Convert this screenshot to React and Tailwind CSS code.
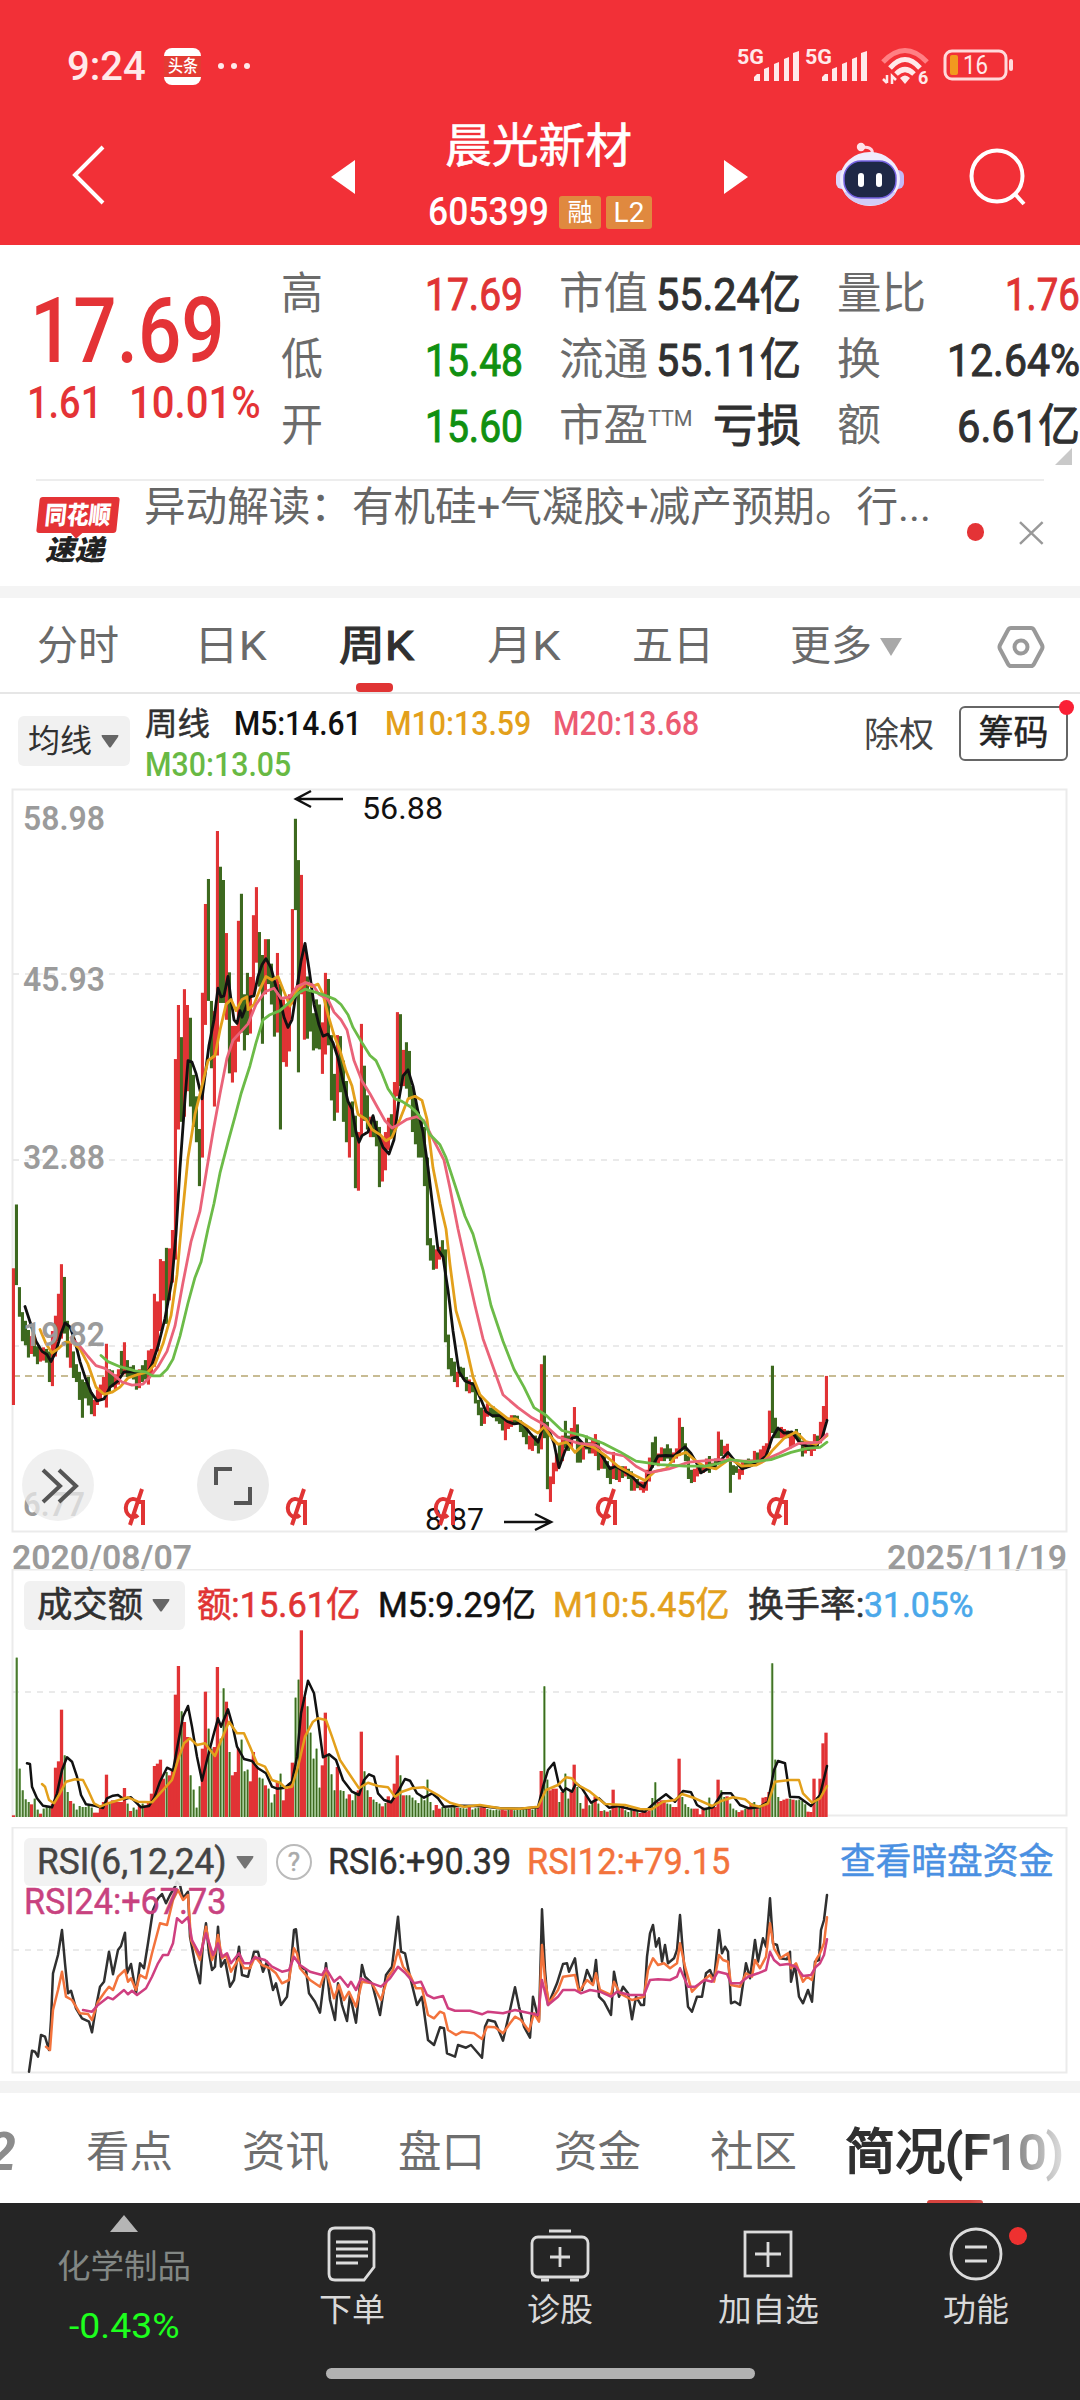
import { useLayoutEffect, useRef } from 'react'

// weekly candles: high, low (pixel depth on the price scale), u = up / d = down
const CANDLES = `957 1225u,832 990d,994 1052d,1043 1100d,1060 1108d,1078 1132d,1090 1125u,1095 1130d,1110 1145d,1115 1140u,1112 1138u,1115 1142d,1120 1180d,1080 1188u,1050 1130u,1007 1100u,949 1095u,974 1085d,1060 1132d,1100 1152u,1120 1172d,1145 1180d,1160 1215d,1175 1250d,1180 1212d,1170 1226d,1200 1243d,1215 1247u,1195 1225u,1185 1215u,1170 1205u,1105 1230u,1155 1200d,1157 1190d,1165 1195u,1155 1185u,1119 1165d,1102 1165u,1137 1170d,1150 1172d,1147 1175d,1158 1195d,1155 1192u,1147 1180d,1137 1175d,1118 1185u,1115 1165u,1007 1150u,1022 1120u,939 1080u,943 1020u,917 1066d,918 1020u,882 985u,547 940u,441 685u,504 670d,410 660u,441 610u,466 640d,578 680d,620 710d,684 796d,417 740u,243 480u,194 433d,433 565d,453 640u,100 540u,170 437d,196 437d,300 470u,377 575d,482 593u,482 573u,276 513u,223 495d,420 530d,378 500d,386 497u,265 425u,210 358u,298 405d,343 517d,312 420u,312 400d,360 440d,395 503d,339 495u,400 685d,430 553u,440 562u,420 532u,253 440u,76 255d,157 573d,186 420u,330 509u,385 507d,415 493d,457 530d,430 526d,440 528d,475 576u,378 538u,390 520d,500 628d,576 668d,500 652u,502 612d,550 670d,590 710d,632 740u,630 700d,658 800d,690 805u,478 700u,560 668d,618 685d,660 700u,660 700d,668 718d,680 798d,700 787u,690 765u,662 725u,655 700d,592 690u,455 620u,459 600d,529 600u,514 605d,531 625d,600 690d,620 714d,650 740d,670 740d,680 796d,740 912d,898 942d,912 960d,920 958u,915 940u,902 935d,920 1102d,1087 1155d,1133 1168d,1140 1180d,1160 1190u,1150 1170d,1152 1175d,1170 1198d,1175 1202u,1180 1200d,1190 1222d,1215 1245d,1230 1266d,1235 1262u,1222 1248u,1230 1245d,1228 1250d,1235 1257d,1240 1262d,1245 1275d,1255 1294u,1250 1272u,1245 1268u,1245 1260d,1246 1262d,1255 1278d,1262 1288d,1270 1302d,1285 1312u,1285 1315u,1285 1305d,1290 1320d,1145 1312u,1128 1290d,1258 1390d,1365 1415u,1338 1380u,1320 1355u,1300 1345d,1285 1335u,1256 1310d,1285 1315d,1270 1310u,1229 1290u,1263 1338d,1295 1338d,1300 1332u,1285 1312d,1298 1320d,1292 1320u,1282 1325u,1295 1353d,1325 1350u,1322 1350d,1335 1368d,1345 1380d,1317 1370u,1345 1372d,1350 1376u,1345 1368d,1345 1365u,1350 1370d,1355 1393d,1370 1393u,1370 1388d,1375 1392u,1375 1397u,1352 1393u,1328 1375u,1298 1348d,1287 1340d,1320 1345u,1308 1335u,1310 1335d,1302 1330d,1310 1335d,1318 1338u,1310 1330u,1250 1325u,1268 1310d,1300 1335d,1325 1370d,1352 1378d,1350 1376u,1345 1365u,1340 1360d,1345 1358u,1330 1352u,1325 1358d,1338 1350u,1330 1352d,1277 1340u,1293 1325d,1305 1322u,1301 1330u,1335 1397d,1343 1362d,1345 1358d,1350 1371u,1335 1362u,1335 1350d,1330 1345d,1332 1345d,1315 1340u,1318 1340d,1312 1335u,1305 1328u,1300 1325u,1236 1310u,1148 1280d,1250 1290d,1270 1290d,1268 1290u,1272 1290u,1275 1290d,1280 1310u,1280 1306u,1272 1290d,1280 1300d,1295 1326d,1300 1320u,1302 1315d,1300 1325u,1282 1315u,1285 1310d,1258 1300u,1227 1290u,1168 1256u`

const M5 = '25,1032 30,1062 36,1100 42,1120 47,1126 51,1140 56,1120 61,1085 65,1064 70,1072 75,1100 80,1140 85,1170 91,1200 97,1217 104,1213 110,1190 118,1178 124,1160 132,1160 140,1162 148,1160 152,1145 158,1110 165,1055 172,980 176,890 180,760 185,625 188,550 192,553 196,575 199,600 202,625 205,580 209,520 214,470 218,408 221,425 224,423 228,385 231,430 234,470 237,477 240,452 242,465 246,445 250,425 254,423 258,385 262,362 266,350 271,368 276,405 280,430 284,465 288,485 292,470 296,420 301,355 305,320 309,370 314,440 319,480 323,502 328,498 333,515 338,545 343,590 348,630 352,645 356,690 359,710 362,697 368,690 373,658 377,690 383,720 389,733 394,705 399,625 403,580 408,568 413,600 418,650 423,690 428,760 433,840 438,920 443,935 448,1000 453,1080 459,1160 465,1178 474,1185 480,1210 486,1238 492,1246 500,1246 508,1258 514,1262 522,1260 530,1280 538,1298 544,1262 549,1275 554,1300 559,1348 565,1315 572,1290 577,1288 585,1305 590,1308 596,1302 602,1325 610,1350 616,1345 624,1355 632,1365 638,1378 644,1386 651,1350 658,1325 666,1324 674,1325 680,1315 685,1307 691,1320 697,1340 701,1358 708,1350 714,1345 720,1335 728,1318 735,1335 742,1350 750,1345 760,1335 766,1325 772,1290 778,1270 784,1280 792,1278 800,1300 808,1307 816,1305 822,1290 827,1255'
const M10 = '40,1077 46,1105 52,1123 58,1115 65,1102 72,1102 80,1115 88,1145 96,1190 104,1204 112,1200 120,1190 128,1172 138,1165 148,1160 155,1145 163,1105 171,1050 177,970 182,860 188,740 195,655 202,600 208,550 215,540 220,490 226,440 231,430 236,452 242,430 247,425 248,450 254,440 260,410 266,385 272,392 278,385 283,410 290,443 296,415 305,397 312,405 318,400 323,420 328,460 334,500 340,530 346,570 352,600 358,655 366,665 372,685 380,695 386,707 392,700 400,665 408,625 415,620 422,628 427,665 433,760 440,830 446,880 450,950 456,1040 465,1100 473,1170 480,1205 490,1225 500,1240 508,1252 516,1252 530,1270 538,1280 544,1268 552,1290 558,1302 567,1298 575,1318 584,1302 594,1308 606,1325 618,1345 630,1358 645,1373 655,1355 666,1350 676,1325 686,1318 696,1335 704,1345 716,1350 730,1330 742,1345 756,1343 764,1335 772,1315 784,1290 796,1278 806,1297 816,1302 827,1285'
const M20 = '71,1093 80,1110 88,1130 96,1148 105,1153 113,1165 122,1180 132,1186 143,1184 150,1170 158,1150 167,1120 175,1070 183,985 191,905 200,845 207,760 213,690 220,615 227,545 233,510 240,495 248,478 256,440 265,415 274,408 281,428 290,425 297,405 306,397 313,402 319,420 328,430 334,455 341,470 347,490 354,550 362,590 370,615 377,640 385,668 392,682 399,675 407,665 417,660 424,668 432,700 440,730 444,745 450,800 458,880 467,960 475,1030 483,1095 493,1150 503,1205 518,1230 532,1250 544,1263 558,1288 579,1300 595,1303 607,1318 624,1325 636,1345 648,1358 669,1350 689,1337 718,1332 742,1335 762,1335 779,1320 799,1300 820,1298 827,1282'
const M30 = '101,1128 108,1140 120,1150 135,1158 145,1160 153,1168 160,1168 167,1155 173,1135 180,1090 188,1025 195,975 201,945 208,880 214,830 220,770 228,710 235,660 241,615 250,560 256,515 263,470 270,460 280,452 290,435 298,418 305,410 315,416 325,422 335,430 341,440 348,460 353,485 362,515 370,540 376,550 382,575 388,605 395,625 402,630 410,640 416,650 424,670 430,695 440,715 446,740 456,800 465,855 473,890 483,960 491,1030 503,1100 514,1155 524,1190 534,1230 546,1245 562,1275 583,1285 603,1300 620,1317 636,1335 660,1342 685,1345 705,1345 718,1340 730,1332 750,1337 771,1332 791,1318 807,1310 820,1308 827,1298'

// weekly turnover, tallest bar = 560
const VOLUME = '5u 478d 145d 80d 53d 45d 38u 55d 22d 10u 25d 30d 30d 40u 148u 167u 322u 185d 75d 48u 40d 22d 33d 30d 30d 35d 28d 13u 13u 30u 45u 127u 45d 50u 50u 45u 45u 87u 40d 18u 28d 22d 35u 40d 35u 45u 70u 153u 160u 172u 115u 135d 125u 140u 367u 453u 317d 285u 240u 125d 82d 28d 92d 205u 376u 265d 205d 210u 450u 235d 386d 346u 195d 125u 135u 205u 232d 137d 142d 107u 195u 150u 118d 115d 95u 85d 43d 68d 108u 130d 50u 85u 100u 163u 358d 412d 560u 360u 332d 253d 175d 205d 88d 155u 313u 185d 128d 80d 150u 80d 78d 55d 68u 50d 75d 80u 256u 137d 80d 60u 52d 45d 40d 32u 42d 62u 50u 100u 185u 125d 65u 65d 65d 58d 50d 42d 60d 50d 112d 45d 20d 36u 25u 30d 27d 26d 28d 30d 28u 27d 26d 25d 30u 22d 26d 28d 29u 30u 24d 22d 20d 22d 20d 22u 20u 22d 24u 20d 22d 24d 22d 24d 24u 22d 26d 30u 138u 392d 112d 80u 85u 85u 45d 75u 130d 55d 78u 157u 90d 42d 25u 65u 35d 45d 62u 40d 18u 20d 16u 20d 82u 32u 30d 35u 20d 15d 20d 18u 20d 12u 15u 15u 20u 57d 104d 45u 50u 50u 40d 38d 30u 30u 175u 60d 38d 30d 25d 25u 25u 8u 28u 25d 58d 32u 30u 112u 80d 60d 62u 40d 25d 20d 15u 20u 25d 30u 42u 45d 30u 35d 58u 60u 75u 461d 172d 60d 48u 52u 55u 55d 52u 50d 52d 48d 38d 16u 15u 115u 60d 115u 221u 253u'

const VOL5 = '27,610 30,612 32,680 37,715 43,737 52,742 57,700 62,630 67,592 72,605 77,650 81,705 86,733 95,737 103,744 107,715 113,707 118,705 124,718 131,712 137,730 141,742 149,738 154,715 160,665 167,623 173,632 178,550 183,470 188,438 192,500 197,590 202,662 207,600 213,530 218,475 221,500 228,448 232,490 237,560 244,597 252,603 258,625 266,640 272,680 277,686 285,683 292,665 297,590 301,460 308,362 314,400 318,480 323,592 329,583 336,600 343,660 352,695 359,705 364,660 369,643 374,650 378,700 384,720 391,727 398,695 405,657 410,662 417,700 424,713 432,700 438,715 444,740 460,737 480,738 500,745 520,746 538,742 543,680 548,630 554,608 559,675 563,695 566,685 572,695 576,670 582,685 591,728 599,715 609,743 618,738 631,748 645,755 656,725 666,703 675,725 683,693 691,697 697,735 704,748 713,742 722,700 731,700 740,735 749,745 759,742 768,725 774,630 778,603 785,610 790,710 799,712 811,738 820,705 827,618'
const VOL10 = '42,672 45,680 49,720 54,730 60,700 66,665 75,658 83,660 88,690 94,730 100,740 110,728 128,712 138,725 152,727 160,700 172,660 178,600 184,550 190,535 197,555 205,550 210,570 215,588 220,550 229,485 237,520 244,520 250,560 257,610 265,620 272,660 280,668 285,683 292,680 298,620 305,530 313,485 318,475 326,480 332,530 340,600 350,645 359,685 368,668 378,678 388,682 395,710 402,695 412,685 424,682 438,705 450,728 464,740 480,735 500,745 520,746 538,740 546,690 558,675 566,652 572,655 578,675 590,695 605,732 625,735 640,747 652,748 663,725 675,720 682,702 695,715 712,738 722,722 733,712 745,718 752,735 760,740 768,730 775,665 790,660 799,660 803,700 812,728 820,715 827,678'

const RSI6 = '29,755 32,692 35,695 38,710 41,645 45,650 49,690 51,600 53,460 58,405 62,330 65,430 68,520 71,512 76,565 82,595 89,605 92,637 96,560 100,500 104,485 109,395 113,463 118,390 121,378 125,338 127,460 131,432 136,520 140,430 144,445 148,370 153,270 158,235 162,222 166,250 170,225 175,200 177,185 180,195 183,235 188,215 190,350 195,430 200,490 203,370 206,310 209,400 212,450 215,440 218,320 221,440 225,420 230,500 234,480 239,380 242,465 248,470 254,395 258,395 263,455 267,425 273,510 276,490 281,555 287,530 291,430 294,330 296,328 300,440 306,450 309,520 315,545 320,578 326,430 330,540 335,600 338,490 342,555 347,603 350,525 356,608 362,435 365,470 372,490 380,585 386,465 392,440 398,290 401,395 405,400 410,470 417,555 422,530 428,660 434,675 440,622 444,625 447,700 455,710 458,675 466,683 471,675 482,713 485,620 488,600 495,605 503,662 510,570 515,502 519,560 524,620 530,653 533,530 537,580 539,600 542,268 545,450 548,555 557,490 563,432 567,430 569,455 575,415 579,510 582,510 587,450 593,490 596,420 599,530 604,545 611,585 614,455 619,530 623,500 628,520 632,598 636,530 641,555 644,555 647,410 650,340 653,315 656,380 659,355 662,425 665,375 668,430 674,415 677,390 680,285 683,400 688,560 692,575 697,530 702,530 706,460 710,450 714,480 719,330 722,400 725,380 728,395 731,550 735,545 740,555 746,430 750,475 755,360 758,425 763,355 766,380 770,235 773,370 777,375 780,415 787,418 790,395 791,485 795,435 799,530 803,550 808,510 812,545 815,425 819,420 821,330 824,300 827,225'
const RSI12 = '46,680 50,690 53,570 58,510 62,455 66,530 72,540 80,580 88,582 92,600 98,545 105,515 109,500 113,510 118,470 125,450 128,485 131,475 136,510 140,465 146,475 152,400 160,310 167,315 173,240 178,210 183,240 188,225 191,360 200,420 206,320 212,420 215,400 218,345 222,415 226,405 231,455 239,415 244,445 250,445 255,410 262,435 270,445 276,460 282,490 289,480 294,385 297,400 300,445 310,480 320,500 326,450 334,535 339,495 344,540 349,515 356,560 362,485 372,490 381,540 388,470 393,450 398,390 403,440 410,465 416,505 422,505 428,585 434,595 440,575 444,580 448,630 456,645 462,635 474,640 482,657 487,620 495,622 503,640 510,610 515,590 521,600 529,633 534,580 539,605 542,375 545,480 549,550 558,510 563,470 575,465 579,515 587,480 593,495 596,460 600,510 611,525 614,485 620,520 632,540 644,530 648,450 653,415 658,435 664,430 670,445 677,430 680,370 685,440 692,515 700,490 710,465 714,485 719,405 723,420 728,425 731,495 740,500 746,460 752,470 755,420 760,445 766,410 770,310 774,385 780,415 788,400 791,445 796,430 803,485 807,470 812,480 816,420 820,400 824,370 827,292'
const RSI24 = '83,570 92,575 98,555 108,532 113,538 124,510 128,523 132,512 137,525 146,505 152,470 158,430 163,405 168,405 173,370 177,295 182,308 188,292 192,360 200,405 206,340 213,405 218,370 222,410 227,400 231,430 239,400 244,430 250,430 255,412 265,420 272,440 282,455 289,450 294,410 300,435 310,455 322,465 326,445 334,485 340,470 348,500 351,485 356,510 361,475 372,490 381,500 390,475 398,440 405,458 414,490 421,485 427,525 434,535 443,528 448,565 455,572 470,572 482,583 488,575 503,580 515,570 530,580 538,585 542,480 548,555 554,540 558,530 563,510 575,510 581,520 590,510 600,515 611,530 617,515 630,525 644,525 650,480 658,478 670,480 677,470 680,445 688,500 695,500 705,480 712,485 718,455 727,462 731,490 740,490 748,470 758,460 766,450 770,395 774,420 780,435 788,432 796,440 803,468 811,465 816,440 820,430 824,405 827,358'

const scaleLine = (line, toY) =>
  line
    .split(' ')
    .map((p) => {
      const [x, y] = p.split(',').map(Number)
      return `${x},${toY(y).toFixed(1)}`
    })
    .join(' ')

const priceY = (v) => 780 + v / 1.96
const volY = (v) => 1560 + v / 3
const rsiY = (v) => 1820 + v / 3

// Squeezes a piece of text to an exact width, like a condensed DIN face
function Fit({ w, className = '', children }) {
  const ref = useRef(null)
  useLayoutEffect(() => {
    ref.current.style.transform = `scaleX(${w / ref.current.offsetWidth})`
  }, [w])
  return (
    <span className={`block shrink-0 whitespace-nowrap leading-none ${className}`} style={{ width: w }}>
      <span ref={ref} className="inline-block origin-left">
        {children}
      </span>
    </span>
  )
}

function Line({ points, toY, color, width = 2.8 }) {
  return (
    <polyline
      points={scaleLine(points, toY)}
      fill="none"
      stroke={color}
      strokeWidth={width}
      strokeLinejoin="round"
      strokeLinecap="round"
    />
  )
}

function GridLine({ y, color = '#e4e4e4', dash = '6 6' }) {
  return <line x1="13" x2="1066" y1={y} y2={y} stroke={color} strokeWidth="1.5" strokeDasharray={dash} />
}

function Signal() {
  return (
    <svg className="h-[36px] w-[64px] overflow-visible" viewBox="0 0 64 36" fill="#ffe9ea">
      <text x="0" y="16" fontSize="20" fontWeight="700" textLength="27" lengthAdjust="spacingAndGlyphs">
        5G
      </text>
      <path d="M17 33v-4l3-3h3v7zM27 33V21l5-2v14zM37 33V16l5-2v19zM47 33V11l5-2v24zM56 33V5l6-2v30z" />
    </svg>
  )
}

function StatusBar() {
  return (
    <div className="flex h-[96px] items-start pt-[46px] text-white">
      <Fit w={79} className="ml-[67px] text-[41px] font-medium text-[#ffe9ea]">9:24</Fit>
      <div className="ml-[18px] mt-[2px] flex h-[37px] w-[37px] flex-col justify-center rounded-[8px] bg-white">
        <div className="bg-[#e43b33] py-[2px]">
          <Fit w={30} className="ml-[4px] text-[17px] font-medium">头条</Fit>
        </div>
      </div>
      <div className="ml-[17px] mt-[17px] flex gap-[7px]">
        <i className="h-[6px] w-[6px] rounded-full bg-[#ffe9ea]" />
        <i className="h-[6px] w-[6px] rounded-full bg-[#ffe9ea]" />
        <i className="h-[6px] w-[6px] rounded-full bg-[#ffe9ea]" />
      </div>
      <div className="ml-auto mr-[65px] mt-[2px] flex">
        <Signal />
        <div className="ml-[4px]">
          <Signal />
        </div>
        <svg className="ml-[12px] h-[38px] w-[48px] overflow-visible" viewBox="0 0 48 38" fill="none">
          <path d="M2 14Q24-9 46 14" stroke="#ff8084" strokeWidth="5" />
          <path d="M9 20Q24 3 39 20" stroke="#ffe9ea" strokeWidth="5" />
          <path d="M15 26Q24 17 33 26" stroke="#ffe9ea" strokeWidth="5" />
          <path d="M19 30Q24 25 29 30L24 36z" fill="#ffe9ea" />
          <path d="M6 27v8M2 31l4 4M11 36v-8l4 4" stroke="#ffe9ea" strokeWidth="2.5" />
          <text x="37" y="36" fontSize="18" fontWeight="700" fill="#ffe9ea">6</text>
        </svg>
        <svg className="ml-[14px] h-[38px] w-[72px]" viewBox="0 0 72 38" fill="none">
          <rect x="2" y="3" width="61" height="28" rx="7" stroke="#ffdadb" strokeWidth="3" />
          <rect x="7" y="7" width="8" height="20" rx="2" fill="#f29a1f" />
          <path d="M68 13v8" stroke="#ffdadb" strokeWidth="4" strokeLinecap="round" />
          <text x="20" y="26" fontSize="25" fill="#ffe9ea" textLength="25" lengthAdjust="spacingAndGlyphs">16</text>
        </svg>
      </div>
    </div>
  )
}

function Robot() {
  return (
    <svg className="h-[66px] w-[70px]" viewBox="0 0 70 66">
      <path d="M37 13c2-7-5-9-11-7" fill="none" stroke="#ffd9e6" strokeWidth="3" />
      <circle cx="26" cy="5" r="4.2" fill="#ffe3ea" />
      <rect x="1" y="28" width="12" height="19" rx="6" fill="#dcd6fb" />
      <rect x="57" y="28" width="12" height="19" rx="6" fill="#c3b9f7" />
      <ellipse cx="35" cy="37" rx="30" ry="27" fill="#f0ecfd" />
      <path d="M9 50c9 18 43 18 52 0z" fill="#d2ccf6" />
      <rect x="9" y="19" width="52" height="37" rx="17" fill="#1e2846" stroke="#7461e0" strokeWidth="1.5" />
      <rect x="23" y="31" width="6" height="14" rx="3" fill="#fff" />
      <rect x="41" y="31" width="6" height="14" rx="3" fill="#fff" />
    </svg>
  )
}

function Header() {
  return (
    <header className="h-[245px] bg-[#f23037]">
      <StatusBar />
      <div className="flex h-[149px] items-start text-white">
        <svg className="ml-[70px] mt-[48px] h-[62px] w-[38px]" viewBox="0 0 38 62" fill="none">
          <path d="M33 3L5 31l28 28" stroke="#fff" strokeWidth="4" />
        </svg>
        <svg className="ml-[223px] mt-[63px] h-[36px] w-[24px]" viewBox="0 0 24 36">
          <path d="M24 1v34L0 18z" fill="#fff" />
        </svg>
        <div className="ml-[75px] w-[222px] pt-[26px]">
          <Fit w={187} className="ml-[15px] text-[47px] [-webkit-text-stroke:0.6px]">晨光新材</Fit>
          <div className="-ml-[2px] mt-[24px] flex items-center">
            <Fit w={121} className="text-[39px] font-medium">605399</Fit>
            <span className="ml-[10px] flex h-[33px] w-[42px] items-center justify-center rounded-[3px] bg-[#e0893f] text-[25px]">融</span>
            <span className="ml-[5px] flex h-[33px] w-[46px] items-center justify-center rounded-[3px] bg-[#e0893f] text-[28px]">
              L2
            </span>
          </div>
        </div>
        <svg className="ml-[72px] mt-[63px] h-[36px] w-[24px]" viewBox="0 0 24 36">
          <path d="M0 1v34l24-17z" fill="#fff" />
        </svg>
        <div className="ml-[87px] mt-[46px]">
          <Robot />
        </div>
        <svg className="ml-[63px] mt-[51px] h-[60px] w-[60px]" viewBox="0 0 60 60" fill="none" stroke="#fff" strokeWidth="4">
          <circle cx="29" cy="29" r="25.5" />
          <path d="M46 46l10 11" />
        </svg>
      </div>
    </header>
  )
}

function Stat({ label, sup, w, value, vw, color = 'text-[#303030]' }) {
  return (
    <div className="flex h-[66px] items-center justify-between">
      <div className="flex items-center text-[44px] text-[#6b6b6b]">
        <Fit w={w}>{label}</Fit>
        {sup && <Fit w={45} className="mb-[14px] text-[22px]">{sup}</Fit>}
      </div>
      <Fit w={vw} className={`text-[45px] [-webkit-text-stroke:1px] ${color}`}>{value}</Fit>
    </div>
  )
}

function Quote() {
  return (
    <section className="relative flex h-[234px] overflow-hidden pt-[16px]">
      <div className="w-[281px] pt-[26px] text-[#e43336]">
        <Fit w={195} className="ml-[30px] text-[90px] font-medium">17.69</Fit>
        <div className="mt-[4px] flex">
          <Fit w={75} className="ml-[27px] text-[44px] font-medium">1.61</Fit>
          <Fit w={132} className="ml-[27px] text-[44px] font-medium">10.01%</Fit>
        </div>
      </div>
      <div className="w-[242px]">
        <Stat label="高" w={42} value="17.69" vw={98} color="text-[#e03434]" />
        <Stat label="低" w={42} value="15.48" vw={98} color="text-[#109010]" />
        <Stat label="开" w={42} value="15.60" vw={98} color="text-[#109010]" />
      </div>
      <div className="ml-[36px] w-[242px]">
        <Stat label="市值" w={89} value="55.24亿" vw={145} />
        <Stat label="流通" w={89} value="55.11亿" vw={145} />
        <Stat label="市盈" w={89} sup="TTM" value="亏损" vw={88} />
      </div>
      <div className="ml-[36px] w-[243px]">
        <Stat label="量比" w={89} value="1.76" vw={75} color="text-[#e03434]" />
        <Stat label="换" w={44} value="12.64%" vw={133} />
        <Stat label="额" w={44} value="6.61亿" vw={123} />
      </div>
      <svg className="absolute right-[8px] top-[203px] h-[17px] w-[17px]" viewBox="0 0 17 17">
        <path d="M17 0v17H0z" fill="#c9c9c9" />
      </svg>
    </section>
  )
}

function News() {
  return (
    <section className="relative mx-[36px] flex h-[107px] border-t-2 border-[#ededed]">
      <div className="w-[84px] pt-[16px]">
        <div className="relative ml-[2px] flex h-[36px] w-[80px] items-center justify-center rounded-[3px] bg-[#e43336] -skew-x-6">
          <Fit w={66} className="text-[25px] font-black text-white">同花顺</Fit>
          <i className="absolute -bottom-[4px] left-[36px] h-[9px] w-[9px] rotate-45 bg-[#e43336]" />
        </div>
        <Fit w={59} className="ml-[9px] mt-[4px] text-[28px] font-black italic text-[#222]">速递</Fit>
      </div>
      <Fit w={787} className="ml-[25px] mt-[6px] text-[41px] text-[#666]">
        异动解读：有机硅+气凝胶+减产预期。行...
      </Fit>
      <i className="ml-[36px] mt-[42px] h-[18px] w-[18px] rounded-full bg-[#e43336]" />
      <svg className="ml-[35px] mt-[40px] h-[24px] w-[25px]" viewBox="0 0 25 24" stroke="#999" strokeWidth="2.5">
        <path d="M1 1l23 22M24 1L1 23" />
      </svg>
    </section>
  )
}

function PeriodTabs() {
  return (
    <nav className="relative flex h-[96px] items-center border-b-2 border-[#e6e6e6] pt-[3px] text-[41px] text-[#6a6a6a]">
      <Fit w={82} className="ml-[37px]">分时</Fit>
      <Fit w={73} className="ml-[75px]">日K</Fit>
      <Fit w={75} className="ml-[72px] text-[#303030] [-webkit-text-stroke:1.2px]">周K</Fit>
      <Fit w={74} className="ml-[73px]">月K</Fit>
      <Fit w={82} className="ml-[71px]">五日</Fit>
      <Fit w={82} className="ml-[76px]">更多</Fit>
      <svg className="ml-[8px] h-[18px] w-[22px]" viewBox="0 0 22 18">
        <path d="M0 0h22L11 18z" fill="#a8a8a8" />
      </svg>
      <svg className="ml-[95px] h-[46px] w-[48px]" viewBox="0 0 48 46" fill="none" stroke="#999" strokeWidth="4">
        <path d="M14 4h20q2 0 3 2l8 15q1 2 0 4l-8 15q-1 2-3 2H14q-2 0-3-2L3 25q-1-2 0-4l8-15q1-2 3-2z" />
        <circle cx="24" cy="23" r="6.5" />
      </svg>
      <i className="absolute bottom-0 left-[356px] h-[9px] w-[37px] rounded-[4px] bg-[#e03434]" />
    </nav>
  )
}

function DropButton({ label, w, className }) {
  return (
    <div className={`flex items-center rounded-[6px] bg-[#f1f1f1] text-[#303030] ${className}`}>
      <Fit w={w}>{label}</Fit>
      <svg className="ml-[9px] h-[13px] w-[18px]" viewBox="0 0 18 13">
        <path d="M1 0h16q1 0 0 2l-7 10q-1 1-2 0L1 2Q0 0 1 0z" fill="#666" />
      </svg>
    </div>
  )
}

function AverageRow() {
  return (
    <div className="flex h-[95px] text-[33px] font-medium">
      <DropButton label="均线" w={64} className="ml-[18px] mt-[22px] h-[50px] w-[112px] pl-[10px] text-[32px] font-normal" />
      <div className="ml-[15px] w-[715px] pt-[13px]">
        <div className="flex items-center">
          <Fit w={65} className="text-[32px] font-normal text-[#303030] [-webkit-text-stroke:0.5px]">周线</Fit>
          <Fit w={128} className="ml-[24px] text-[#111]">M5:14.61</Fit>
          <Fit w={146} className="ml-[23px] text-[#e3a01b]">M10:13.59</Fit>
          <Fit w={146} className="ml-[22px] text-[#ec5b72]">M20:13.68</Fit>
        </div>
        <Fit w={146} className="mt-[8px] text-[#68b944]">M30:13.05</Fit>
      </div>
      <Fit w={70} className="ml-[4px] mt-[24px] text-[35px] font-normal text-[#444]">除权</Fit>
      <div className="relative ml-[25px] mt-[12px] flex h-[55px] w-[109px] shrink-0 items-center justify-center rounded-[6px] border-2 border-[#666] text-[#222]">
        <Fit w={70} className="text-[35px] font-normal [-webkit-text-stroke:0.5px]">筹码</Fit>
        <i className="absolute -right-[8px] -top-[8px] h-[15px] w-[15px] rounded-full bg-[#fa2035]" />
      </div>
    </div>
  )
}

function AxisLabel({ x, y, w, children, color = '#9b9b9b', size = 33, weight = 600 }) {
  return (
    <text x={x} y={y} fill={color} fontSize={size} fontWeight={weight} textLength={w} lengthAdjust="spacingAndGlyphs">
      {children}
    </text>
  )
}

function PriceChart() {
  return (
    <svg className="block h-[780px] w-full overflow-visible" viewBox="0 789 1080 780">
      <rect x="12.5" y="789.5" width="1054" height="742" fill="none" stroke="#ebebeb" strokeWidth="2" />
      <GridLine y={974} />
      <GridLine y={1160} />
      <GridLine y={1346} />
      <GridLine y={1376} color="#b7a671" dash="7 5" />
      {CANDLES.split(',').map((c, i) => {
        const [high, low] = c.slice(0, -1).split(' ').map(Number)
        return (
          <rect
            key={i}
            x={11.9 + i * 3}
            y={priceY(high)}
            width="3.1"
            height={(low - high) / 1.96}
            fill={c.endsWith('u') ? '#e13335' : '#3d691f'}
          />
        )
      })}
      <Line points={M5} toY={priceY} color="#111" />
      <Line points={M10} toY={priceY} color="#e3a01b" />
      <Line points={M20} toY={priceY} color="#ea6379" />
      <Line points={M30} toY={priceY} color="#6cbb48" />
      <AxisLabel x="23" y="830" w="82">58.98</AxisLabel>
      <AxisLabel x="23" y="991" w="82">45.93</AxisLabel>
      <AxisLabel x="23" y="1169" w="82">32.88</AxisLabel>
      <AxisLabel x="23" y="1346" w="82">19.82</AxisLabel>
      <AxisLabel x="23" y="1516" w="62">6.77</AxisLabel>
      <AxisLabel x="362" y="819" w="81" color="#111" size={32} weight={400}>56.88</AxisLabel>
      <AxisLabel x="425" y="1530" w="59" color="#111" size={31} weight={400}>8.87</AxisLabel>
      <g fill="none" stroke="#111" strokeWidth="2.5">
        <path d="M343 799h-47M311 791l-15 8 15 8M504 1522h46M535 1514l16 8-16 8" />
      </g>
      <g fill="none" stroke="#e03434" strokeWidth="4">
        {[135, 297, 445, 607, 778].map((x) => (
          <path key={x} d={`M${x + 3} 1501a7.5 9 0 1 0 0 14M${x + 8} 1500v25M${x + 8} 1502h-6M${x + 7} 1489l-12 36`} />
        ))}
      </g>
      <circle cx="58" cy="1485" r="36" fill="#ebebeb" opacity="0.75" />
      <circle cx="233" cy="1485" r="36" fill="#ebebeb" />
      <g fill="none" stroke="#555" strokeWidth="4">
        <path d="M43 1470l17 16-17 16M59 1470l17 16-17 16M232 1469h-16v16M234 1503h16v-16" />
      </g>
      <AxisLabel x="12" y="1569" w="180" size={34}>2020/08/07</AxisLabel>
      <AxisLabel x="887" y="1569" w="180" size={34}>2025/11/19</AxisLabel>
    </svg>
  )
}

function VolumePanel() {
  return (
    <section className="relative h-[258px]">
      <svg className="absolute inset-0 h-[258px] w-full" viewBox="0 1569 1080 258">
        <rect x="12.5" y="1569.5" width="1054" height="246" fill="none" stroke="#ebebeb" strokeWidth="2" />
        <GridLine y={1692} />
        {VOLUME.split(' ').map((v, i) => {
          const h = parseInt(v) / 3
          const x = 12.4 + i * 2.998
          if (v.endsWith('u')) return <rect key={i} x={x - 0.5} y={1817 - h} width="3.3" height={h} fill="#e13335" />
          return (
            <g key={i}>
              <rect x={x} y={1817 - h} width="2.6" height={h} fill="#8cb87b" />
              <rect x={x + 0.8} y={1817 - h} width="1.2" height={h} fill="#3d691f" />
            </g>
          )
        })}
        <Line points={VOL5} toY={volY} color="#111" width={2.5} />
        <Line points={VOL10} toY={volY} color="#e3a01b" width={2.5} />
      </svg>
      <div className="relative flex items-center pt-[12px] text-[35px] [-webkit-text-stroke:0.6px]">
        <DropButton label="成交额" w={106} className="ml-[24px] h-[49px] w-[161px] pl-[13px]" />
        <Fit w={163} className="ml-[12px] text-[#e03434]">额:15.61亿</Fit>
        <Fit w={158} className="ml-[18px] text-[#111]">M5:9.29亿</Fit>
        <Fit w={177} className="ml-[17px] text-[#e3a01b]">M10:5.45亿</Fit>
        <Fit w={116} className="ml-[18px] text-[#303030]">换手率:</Fit>
        <Fit w={110} className="text-[#4aa8ea]">31.05%</Fit>
      </div>
    </section>
  )
}

function RsiPanel() {
  return (
    <section className="relative h-[254px]">
      <svg className="absolute inset-0 h-[254px] w-full" viewBox="0 1827 1080 254">
        <rect x="12.5" y="1827.5" width="1054" height="245" fill="none" stroke="#ebebeb" strokeWidth="2" />
        <GridLine y={1950} />
        <Line points={RSI6} toY={rsiY} color="#303030" width={2.5} />
        <Line points={RSI12} toY={rsiY} color="#f3733c" width={2.5} />
        <Line points={RSI24} toY={rsiY} color="#cf3f80" width={2.5} />
      </svg>
      <div className="relative flex items-center pt-[11px] text-[36px] [-webkit-text-stroke:0.5px]">
        <DropButton label="RSI(6,12,24)" w={190} className="ml-[24px] h-[48px] w-[243px] pl-[13px] opacity-90" />
        <div className="ml-[9px] flex h-[36px] w-[36px] items-center justify-center rounded-full border-2 border-[#bbb] text-[26px] leading-none text-[#aaa]">
          ?
        </div>
        <Fit w={183} className="ml-[16px] text-[#303030]">RSI6:+90.39</Fit>
        <Fit w={203} className="ml-[16px] text-[#f3733c]">RSI12:+79.15</Fit>
        <Fit w={214} className="ml-[110px] text-[#4a90e2]">查看暗盘资金</Fit>
      </div>
      <Fit w={202} className="relative ml-[24px] -mt-[2px] text-[36px] text-[#c8427f] [-webkit-text-stroke:0.5px]">RSI24:+67.73</Fit>
    </section>
  )
}

function InfoTabs() {
  return (
    <nav className="relative flex h-[110px] items-center overflow-hidden bg-white pt-[8px] text-[43px] text-[#6e6e6e]">
      <span className="-ml-[14px] w-[30px] text-[54px] font-bold italic leading-none text-[#8c8c8c]">2</span>
      <Fit w={87} className="ml-[70px]">看点</Fit>
      <Fit w={87} className="ml-[69px]">资讯</Fit>
      <Fit w={87} className="ml-[69px]">盘口</Fit>
      <Fit w={87} className="ml-[69px]">资金</Fit>
      <Fit w={87} className="ml-[69px]">社区</Fit>
      <Fit w={219} className="ml-[48px] text-[49px] text-[#303030] [-webkit-text-stroke:1.8px]">简况(F10)</Fit>
      <i className="absolute bottom-0 left-[927px] h-[3px] w-[56px] rounded-t-[3px] bg-[#d8443f]" />
      <i className="absolute right-0 top-0 h-full w-[110px] bg-linear-to-r from-white/0 to-white" />
    </nav>
  )
}

function BottomBar() {
  return (
    <footer className="flex h-[197px] flex-col bg-[#252525] text-[#d9d9d9]">
      <div className="flex h-[165px] text-[32px]">
        <div className="flex w-[248px] flex-col items-center pt-[12px]">
          <svg className="h-[17px] w-[28px]" viewBox="0 0 28 17">
            <path d="M14 0l14 17H0z" fill="#b5b5b5" />
          </svg>
          <Fit w={134} className="mt-[18px] text-[33px] text-[#828784]">化学制品</Fit>
          <Fit w={111} className="mt-[26px] text-[35px] text-[#1dff1d]">-0.43%</Fit>
        </div>
        <div className="flex w-[208px] flex-col items-center pt-[22px]">
          <svg className="h-[58px] w-[50px]" viewBox="0 0 50 58" fill="none" stroke="#dcdcdc" strokeWidth="2.8">
            <path d="M8 3h33q6 0 6 6v33L37 55H8q-6 0-6-6V9q0-6 6-6z" />
            <path d="M9 17h32M9 24h32M9 31h32M9 38h22" />
          </svg>
          <Fit w={66} className="mt-[11px]">下单</Fit>
        </div>
        <div className="flex w-[208px] flex-col items-center pt-[22px]">
          <svg className="h-[58px] w-[60px]" viewBox="0 0 60 58" fill="none" stroke="#dcdcdc" strokeWidth="2.8">
            <rect x="2" y="12" width="56" height="40" rx="6" />
            <path d="M19 6h22M30 22v20M20 32h20M11 55h8M40 55h9" />
          </svg>
          <Fit w={66} className="mt-[11px]">诊股</Fit>
        </div>
        <div className="flex w-[208px] flex-col items-center pt-[22px]">
          <svg className="h-[58px] w-[50px]" viewBox="0 0 50 58" fill="none" stroke="#dcdcdc" strokeWidth="2.8">
            <rect x="2" y="7" width="46" height="44" />
            <path d="M25 17v25M12 29h26" />
          </svg>
          <Fit w={101} className="mt-[11px]">加自选</Fit>
        </div>
        <div className="relative flex w-[208px] flex-col items-center pt-[22px]">
          <svg className="h-[58px] w-[54px]" viewBox="0 0 54 58" fill="none" stroke="#dcdcdc" strokeWidth="2.8">
            <circle cx="27" cy="29" r="25" />
            <path d="M16 22h22M16 36h22" />
          </svg>
          <Fit w={66} className="mt-[11px]">功能</Fit>
          <i className="absolute left-[137px] top-[24px] h-[18px] w-[18px] rounded-full bg-[#ee3130]" />
        </div>
      </div>
      <div className="mx-auto h-[11px] w-[429px] rounded-full bg-[#b2b2b2]" />
    </footer>
  )
}

export default function App() {
  return (
    <div className="h-[2400px] w-[1080px] overflow-hidden bg-white font-[Roboto,'Noto_Sans_CJK_SC',sans-serif]">
      <Header />
      <Quote />
      <News />
      <div className="h-[12px] bg-[#f4f4f4]" />
      <PeriodTabs />
      <AverageRow />
      <PriceChart />
      <VolumePanel />
      <RsiPanel />
      <div className="h-[12px] bg-[#f3f3f3]" />
      <InfoTabs />
      <BottomBar />
    </div>
  )
}
